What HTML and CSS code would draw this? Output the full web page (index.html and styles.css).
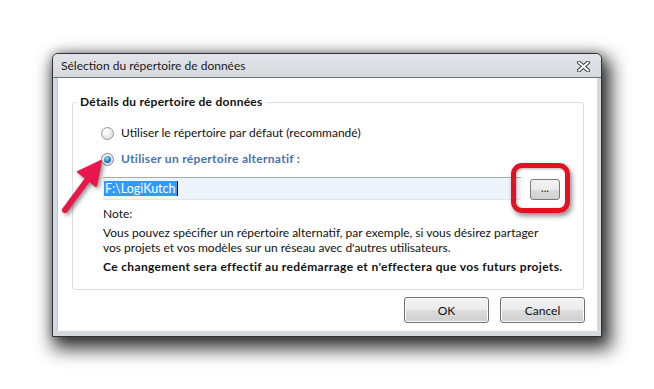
FILE: index.html
```html
<!DOCTYPE html>
<html lang="fr">
<head>
<meta charset="utf-8">
<title>Sélection du répertoire de données</title>
<link rel="stylesheet" href="styles.css">
</head>
<body>
<div class="stage">
  <div class="window">
    <div class="titlebar">
      <span class="title">Sélection du répertoire de données</span>
      <svg class="close" width="13" height="11" viewBox="0 0 13 11">
        <path d="M2 1.5 L11 9.5 M11 1.5 L2 9.5" stroke="#3b4048" stroke-width="4" stroke-linecap="round"/>
        <path d="M2 1.5 L11 9.5 M11 1.5 L2 9.5" stroke="#ffffff" stroke-width="2" stroke-linecap="round"/>
      </svg>
    </div>
    <div class="client">
      <fieldset class="group">
        <legend class="legend">Détails du répertoire de données</legend>
        <div class="group-body">
          <label class="option">
            <span class="radio"></span>
            <span>Utiliser le répertoire par défaut (recommandé)</span>
          </label>
          <label class="option option-on">
            <span class="radio radio-on"><span class="dot"></span></span>
            <span>Utiliser un répertoire alternatif :</span>
          </label>
          <div class="path-row">
            <div class="path-input"><span class="sel">F:\LogiKutch</span><span class="caret"></span></div>
            <button class="browse">...</button>
            <span class="highlight"></span>
          </div>
          <p class="note-title">Note:</p>
          <p class="note">Vous pouvez spécifier un répertoire alternatif, par exemple, si vous désirez partager<br>vos projets et vos modèles sur un réseau avec d'autres utilisateurs.</p>
          <p class="note-bold">Ce changement sera effectif au redémarrage et n'effectera que vos futurs projets.</p>
        </div>
      </fieldset>
      <div class="actions">
        <button class="btn">OK</button>
        <button class="btn">Cancel</button>
      </div>
    </div>
  </div>
  <svg class="arrow" width="50" height="62" viewBox="0 0 50 62">
    <path d="M6 55 L29 24" stroke="#e8174b" stroke-width="6" stroke-linecap="round"/>
    <polygon points="42,6 19,17 37,31" fill="#e8174b" stroke="#e8174b" stroke-width="2" stroke-linejoin="round"/>
  </svg>
</div>
</body>
</html>
```

FILE: styles.css
```css
html, body {
  margin: 0;
  background: #ffffff;
}

body {
  font-family: Lato, "Open Sans", sans-serif;
  font-size: 12px;
  color: #111;
}

.stage {
  position: relative;
  width: 654px;
  height: 389px;
  padding: 53px 0 0 52px;
  box-sizing: border-box;
}

.window {
  width: 550px;
  height: 284px;
  box-sizing: border-box;
  border: 1px solid #2e3338;
  border-radius: 6px 6px 0 0;
  background: #d3d9de;
  display: flex;
  flex-direction: column;
  box-shadow: 5px 8px 18px 4px rgba(0, 0, 0, 0.78), 0 0 10px rgba(0, 0, 0, 0.25);
}

.titlebar {
  height: 23px;
  border-bottom: 1px solid #6d747c;
  border-radius: 5px 5px 0 0;
  background: linear-gradient(#e1e4e8, #d6dbe0);
  display: flex;
  align-items: center;
  justify-content: space-between;
  padding: 0 11px 0 8px;
}

.title {
  font-size: 12px;
  color: #1a1a1a;
}

.close {
  display: block;
  margin-top: 1px;
}

.client {
  flex: 1;
  margin: 0 4px 5px 4px;
  background: #ffffff;
  display: flex;
  flex-direction: column;
  box-shadow: inset 1px 0 0 #bfc6cc;
}

.group {
  margin: 16px 13px 0 15px;
  padding: 15px 12px 15px 0;
  border: 1px solid #d6dfe5;
  border-radius: 3px;
}

.group-body {
  padding-left: 28px;
}

.legend {
  font-weight: bold;
  line-height: 16px;
  padding: 0 3px;
  margin-left: 4px;
  letter-spacing: 0.25px;
  color: #111;
}

.option {
  display: flex;
  align-items: center;
  gap: 7px;
  line-height: 16px;
}

.option + .option {
  margin-top: 10px;
}

.option-on {
  font-weight: bold;
  color: #4673b4;
  letter-spacing: 0.3px;
}

.radio {
  width: 11px;
  height: 11px;
  border-radius: 50%;
  border: 1px solid #9a9a9a;
  background: radial-gradient(circle at 40% 35%, #ffffff 0%, #e9e9e9 55%, #cfcfcf 100%);
  display: flex;
  align-items: center;
  justify-content: center;
  flex: none;
}

.radio-on {
  border-color: #7f8a94;
}

.dot {
  width: 7px;
  height: 7px;
  border-radius: 50%;
  background: radial-gradient(circle at 40% 35%, #9fdcff 0%, #2c84c8 50%, #0f3f6e 100%);
}

.path-row {
  position: relative;
  display: flex;
  align-items: center;
  gap: 9px;
  margin: 10px 0 0 2px;
}

.path-input {
  width: 417px;
  height: 21px;
  border-top: 1px solid #a6abb0;
  border-bottom: 1px solid #dfe6ec;
  background: #edf4fc;
  display: flex;
  align-items: center;
  padding-left: 1px;
}

.sel {
  background: #3399ff;
  color: #ffffff;
  line-height: 15px;
  font-size: 12.5px;
  padding: 0 1px;
}

.caret {
  width: 1px;
  height: 15px;
  background: #000;
}

.browse {
  width: 30px;
  height: 21px;
  margin-top: 1px;
  padding: 0 0 4px;
  border: 1px solid #7a7a7a;
  border-radius: 3px;
  background: linear-gradient(#f3f3f3 0%, #ebebeb 50%, #dddddd 51%, #cfcfcf 100%);
  font-family: Lato, sans-serif;
  font-size: 11px;
  color: #222;
  line-height: 1;
}

.highlight {
  position: absolute;
  left: 408px;
  top: -14px;
  width: 49px;
  height: 40px;
  border: 5px solid #e3101f;
  border-radius: 11px;
  box-shadow: 2px 3px 5px rgba(0, 0, 0, 0.45), inset 1px 1px 3px rgba(0, 0, 0, 0.3);
}

.note-title {
  margin: 6px 0 0 2px;
  line-height: 16px;
}

.note {
  margin: 3px 0 0 2px;
  line-height: 15px;
}

.note-bold {
  margin: 4px 0 0 2px;
  line-height: 15px;
  font-weight: bold;
  letter-spacing: 0.35px;
}

.actions {
  display: flex;
  justify-content: flex-end;
  gap: 11px;
  padding: 7px 12px 0 0;
}

.btn {
  width: 85px;
  height: 26px;
  border: 1px solid #707070;
  border-radius: 3px;
  background: linear-gradient(#f2f2f2 0%, #ebebeb 50%, #dddddd 51%, #cfcfcf 100%);
  font-family: Lato, sans-serif;
  font-size: 12px;
  color: #111;
  box-shadow: inset 0 0 0 1px #fbfbfb;
}

.arrow {
  position: absolute;
  left: 59px;
  top: 155px;
  filter: drop-shadow(2px 2px 2px rgba(0, 0, 0, 0.45));
}
```
